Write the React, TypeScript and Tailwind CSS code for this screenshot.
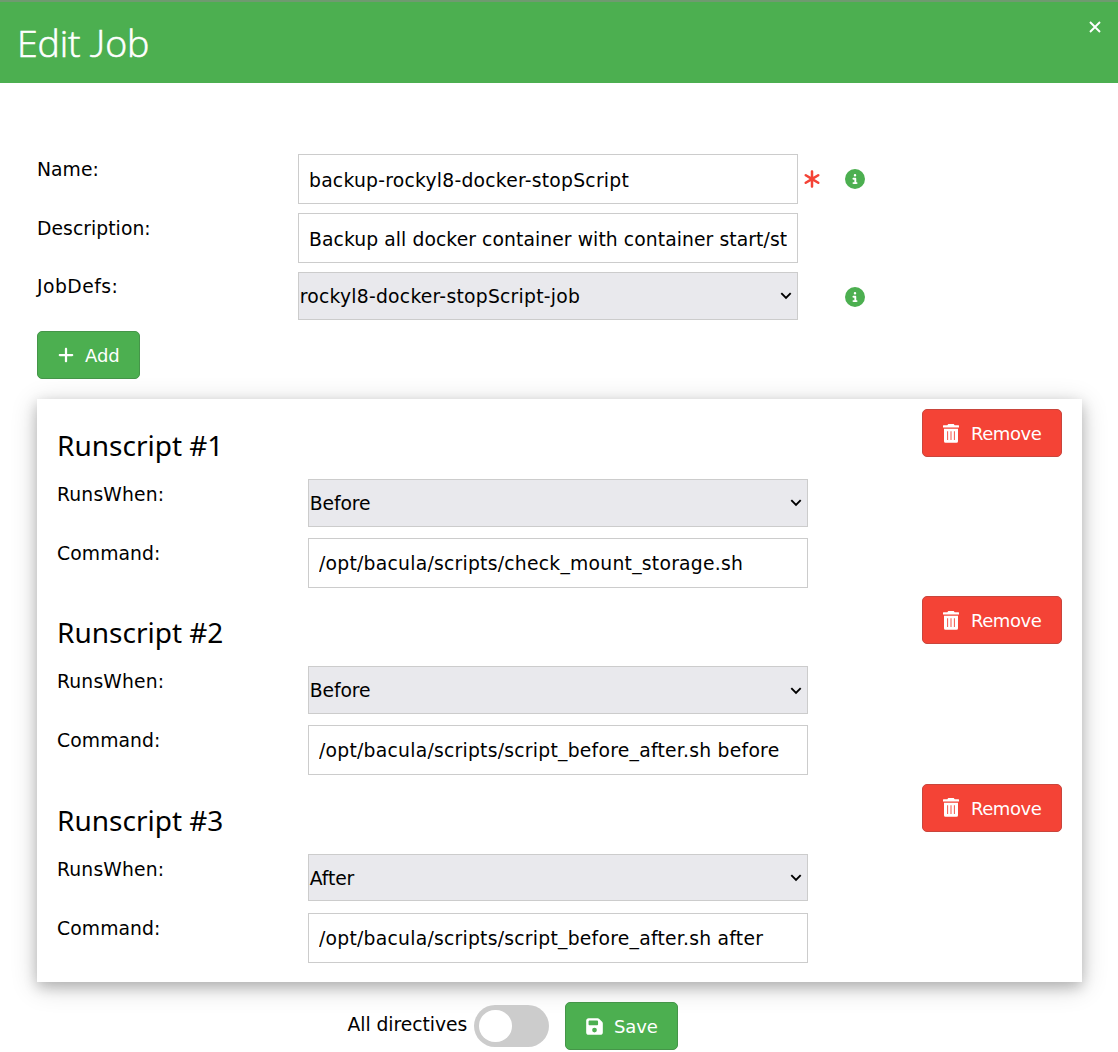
import React from "react";
import { FaPlus, FaAsterisk, FaCircleInfo, FaFloppyDisk } from "react-icons/fa6";

const ROWS = [
  { when: "Before", command: "/opt/bacula/scripts/check_mount_storage.sh" },
  { when: "Before", command: "/opt/bacula/scripts/script_before_after.sh before" },
  { when: "After", command: "/opt/bacula/scripts/script_before_after.sh after" },
];

function TextBox({ children, text = "leading-[50.4px] tracking-[0.25px]" }: { children: string; text?: string }) {
  return (
    <div className="h-[50px] w-[500px] shrink-0 border border-[#ccc] bg-white px-[10px]">
      <div className={`overflow-hidden whitespace-nowrap ${text}`}>{children}</div>
    </div>
  );
}

function SelectBox({ children, tracking = "tracking-[-0.1px]" }: { children: string; tracking?: string }) {
  return (
    <div className="flex h-[47.5px] w-[500px] shrink-0 items-center justify-between border border-[#ccc] bg-[#e9e9ed] pl-[0.7px] pr-[5.5px]">
      <span className={`mt-[2.6px] whitespace-nowrap ${tracking}`}>{children}</span>
      <svg className="mt-px" width="12" height="8" viewBox="0 0 12 8" fill="none" stroke="#000" strokeWidth="1.9">
        <path d="M1.3 1.2 6 6 10.7 1.2" />
      </svg>
    </div>
  );
}

function Label({ children }: { children: string }) {
  return <div className="w-[261px] shrink-0 leading-[31px] tracking-[0.05px]">{children}</div>;
}

function RemoveButton() {
  return (
    <button className="flex h-[48px] w-[140px] items-center rounded-[5px] border border-[#c9453c] bg-[#f44336] pl-[20px] text-white">
      <svg width="16" height="19" viewBox="0 0 16 19" fill="#fff">
        <path
          fillRule="evenodd"
          d="M5.3 0h5.4l1 1.3h3.8q.5 0 .5.5v1.7H0V1.8q0-.5.5-.5h3.8zM1 4.700h14v12.500q0 1.500-1.500 1.500h-11Q1 18.700 1 17.200zM4.200 7.300v8.700h.9V7.300zM7.550 7.300v8.700h.9V7.300zM10.900 7.300v8.700h.9V7.300z"
        />
      </svg>
      <span className="ml-[12px] mt-[0.6px] text-[18px] tracking-[-0.45px]">Remove</span>
    </button>
  );
}

export default function App() {
  return (
    <div className="h-[1052px] w-[1118px] overflow-hidden bg-white font-['DejaVu_Sans',sans-serif] text-[18.75px] tracking-[-0.1px] text-black">
      <header className="flex h-[83px] items-start justify-between border-t-2 border-[#6f9a70] bg-[#4caf50] pl-[17px] pr-[17px] text-white">
        <h1 className="mt-[14px] font-['Open_Sans',sans-serif] text-[37.5px] font-light leading-[54px] tracking-[-0.2px] [-webkit-text-stroke:0.6px_white]">
          Edit <span className="font-['Lato',sans-serif]">J</span>ob
        </h1>
        <svg className="mt-[18.5px]" width="12" height="12" viewBox="0 0 12 12" stroke="#fff" strokeWidth="1.9">
          <path d="M1 1 11 11M11 1 1 11" />
        </svg>
      </header>

      <main className="pl-[37px] pr-[36px] pt-[71px]">
        <div className="flex h-[59px]">
          <Label>Name:</Label>
          <TextBox text="leading-[51px] tracking-[0.24px]">backup-rockyl8-docker-stopScript</TextBox>
          <FaAsterisk className="ml-[4px] mt-[15px] text-[20px] text-[#f44336]" />
          <FaCircleInfo className="ml-[23px] mt-[15px] text-[20px] text-[#4caf50]" />
        </div>
        <div className="flex h-[59px]">
          <Label>Description:</Label>
          <TextBox text="leading-[51px] tracking-[0.08px]">Backup all docker container with container start/st</TextBox>
        </div>
        <div className="flex h-[59px]">
          <div className="w-[261px] shrink-0 leading-[29px] tracking-[0.45px]">JobDefs:</div>
          <SelectBox tracking="tracking-[0.25px]">rockyl8-docker-stopScript-job</SelectBox>
          <FaCircleInfo className="ml-[47px] mt-[15px] text-[20px] text-[#4caf50]" />
        </div>

        <button className="flex h-[48px] w-[103px] items-center rounded-[5px] border border-[#459549] bg-[#4caf50] pl-[19px] text-white">
          <FaPlus className="text-[18px]" />
          <span className="ml-[10px] text-[18px]">Add</span>
        </button>

        <section className="mt-[20px] h-[583px] bg-white px-[20px] pt-[10px] shadow-[0_5px_12.5px_rgba(0,0,0,0.2),0_5px_25px_rgba(0,0,0,0.19)]">
          {ROWS.map((row, i) => (
            <div key={i} className="h-[187.45px]">
              <div className="flex h-[70px] justify-between">
                <h2 className="mt-[15px] font-['Noto_Sans',sans-serif] text-[28px] leading-[42px] tracking-normal">{`Runscript #${i + 1}`}</h2>
                <RemoveButton />
              </div>
              <div className="flex h-[59px]">
                <div className="w-[251px] leading-[31px] tracking-[0.15px]">RunsWhen:</div>
                <SelectBox>{row.when}</SelectBox>
              </div>
              <div className="flex">
                <div className="w-[251px] leading-[31px] tracking-[0.1px]">Command:</div>
                <TextBox>{row.command}</TextBox>
              </div>
            </div>
          ))}
        </section>

        <footer className="ml-[310.5px] mt-[20px] flex h-[48px] items-center">
          <span className="mt-[-2px] w-[126.5px] whitespace-nowrap tracking-[-0.05px]">All directives</span>
          <div className="flex h-[42px] w-[75px] items-center rounded-full bg-[#ccc] pl-[5px]">
            <div className="size-[32.5px] rounded-full bg-white" />
          </div>
          <button className="ml-[16px] flex h-[48px] w-[113px] items-center rounded-[5px] border border-[#459549] bg-[#4caf50] pl-[19px] text-white">
            <FaFloppyDisk className="text-[19px]" />
            <span className="ml-[10px] text-[18px]">Save</span>
          </button>
        </footer>
      </main>
    </div>
  );
}
